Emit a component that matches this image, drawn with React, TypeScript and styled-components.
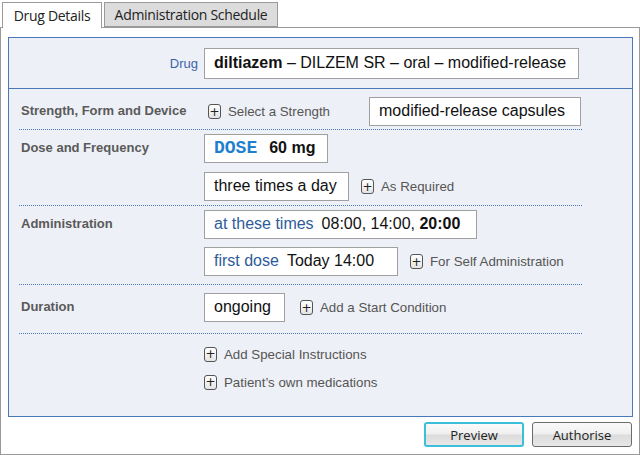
import styled, { createGlobalStyle } from "styled-components";

const GlobalStyle = createGlobalStyle`
  html, body {
    margin: 0;
    padding: 0;
    background: #ffffff;
  }
  body {
    font-family: "Liberation Sans", Arial, sans-serif;
  }
`;

const Page = styled.div`
  width: 640px;
  height: 455px;
  box-sizing: border-box;
  display: flex;
  flex-direction: column;
`;

const TabBar = styled.div`
  display: flex;
  gap: 2px;
  padding: 2px 0 0 2px;
  height: 25px;
  position: relative;
  z-index: 1;
`;

const Tab = styled.div<{ $active?: boolean; $width: number }>`
  width: ${(p) => p.$width}px;
  box-sizing: border-box;
  height: ${(p) => (p.$active ? 26 : 25)}px;
  display: flex;
  align-items: center;
  justify-content: center;
  font-family: "Open Sans", "Noto Sans", sans-serif;
  font-size: 14px;
  letter-spacing: -0.3px;
  color: #222;
  border: 1px solid #9a9a9a;
  border-bottom: ${(p) => (p.$active ? "none" : "1px solid #9a9a9a")};
  background: ${(p) => (p.$active ? "#ffffff" : "#dcdcdc")};
`;

const Frame = styled.div`
  flex: 1;
  border: 1px solid #9a9a9a;
  display: flex;
  flex-direction: column;
  padding: 9px 6px 6px 7px;
  gap: 5px;
`;

const Card = styled.div`
  border: 1px solid #4b79b8;
  background: #edf0f6;
  height: 380px;
  box-sizing: border-box;
  display: flex;
  flex-direction: column;
`;

const DrugHeader = styled.div`
  display: flex;
  align-items: center;
  height: 50px;
  border-bottom: 1px solid #4b79b8;
`;

const DrugLabel = styled.div`
  width: 189px;
  text-align: right;
  padding-right: 6px;
  font-size: 13px;
  color: #3a64a8;
`;

const Box = styled.div<{ $h?: number; $w: number }>`
  box-sizing: border-box;
  width: ${(p) => p.$w}px;
  height: ${(p) => p.$h ?? 29}px;
  display: inline-flex;
  align-items: center;
  padding: 0 0 1px 9px;
  background: #ffffff;
  border: 1px solid #a0a0a0;
  font-size: 16px;
  color: #111;
  white-space: nowrap;
  flex-shrink: 0;
`;

const Rows = styled.div`
  margin-left: 10px;
  width: 563px;
  display: flex;
  flex-direction: column;
`;

const Section = styled.div<{ $pt: number; $pb: number; $last?: boolean }>`
  display: grid;
  grid-template-columns: 185px 1fr;
  align-items: start;
  padding: ${(p) => p.$pt}px 0 ${(p) => p.$pb}px;
  border-bottom: ${(p) => (p.$last ? "none" : "1px dotted #4b79b8")};
`;

const Label = styled.div`
  height: 26px;
  display: flex;
  align-items: center;
  padding-left: 2px;
  font-size: 13px;
  font-weight: bold;
  color: #5a5a5a;
`;

const Stack = styled.div<{ $gap: number }>`
  display: flex;
  flex-direction: column;
  gap: ${(p) => p.$gap}px;
`;

const Line = styled.div<{ $gap?: number; $indent?: number }>`
  display: flex;
  align-items: center;
  gap: ${(p) => p.$gap ?? 12}px;
  height: 29px;
  padding-left: ${(p) => p.$indent ?? 0}px;
`;

const ExtraLine = styled.div`
  display: flex;
  align-items: center;
  height: 28px;
`;

const Action = styled.div`
  display: inline-flex;
  align-items: center;
  gap: 7px;
  font-size: 13.3px;
  color: #555;
  white-space: nowrap;
`;

const PlusIcon = styled.span`
  box-sizing: border-box;
  width: 13px;
  height: 15px;
  border: 1px solid #555;
  border-radius: 3px;
  background: linear-gradient(#ffffff, #e4e4e4);
  display: inline-flex;
  align-items: center;
  justify-content: center;
  font-size: 12px;
  line-height: 1;
  color: #222;
  font-family: "DejaVu Sans", sans-serif;
`;

const Blue = styled.span`
  color: #2e5b9a;
  margin-right: 8px;
`;

const DoseTag = styled.span`
  font-family: "Liberation Mono", "Courier New", monospace;
  font-weight: bold;
  font-size: 18px;
  color: #1f7fcf;
  margin-right: 12px;
`;

const Strong = styled.b`
  font-weight: bold;
`;

const Footer = styled.div`
  display: flex;
  justify-content: flex-end;
  gap: 8px;
  padding-right: 1px;
`;

const Button = styled.button<{ $focus?: boolean }>`
  width: 100px;
  height: 25px;
  box-sizing: border-box;
  border-radius: 3px;
  border: ${(p) => (p.$focus ? "2px solid #3cbfd8" : "1px solid #6b6b6b")};
  background: linear-gradient(#fafafa 0%, #f0f0f0 45%, #dcdcdc 55%, #e8e8e8 100%);
  font-family: "Open Sans", "Noto Sans", sans-serif;
  font-size: 13px;
  color: #222;
  padding: 0;
`;

function Plus({ children }: { children: string }) {
  return (
    <Action>
      <PlusIcon>+</PlusIcon>
      {children}
    </Action>
  );
}

export default function App() {
  return (
    <Page>
      <GlobalStyle />
      <TabBar>
        <Tab $active $width={100}>Drug Details</Tab>
        <Tab $width={174}>Administration Schedule</Tab>
      </TabBar>
      <Frame>
        <Card>
          <DrugHeader>
            <DrugLabel>Drug</DrugLabel>
            <Box $h={31} $w={375}>
              <Strong>diltiazem</Strong>&nbsp;– DILZEM SR – oral – modified-release
            </Box>
          </DrugHeader>
          <Rows>
            <Section $pt={8} $pb={3}>
              <Label>Strength, Form and Device</Label>
              <Line $gap={39} $indent={4}>
                <Plus>Select a Strength</Plus>
                <Box $w={212}>modified-release capsules</Box>
              </Line>
            </Section>
            <Section $pt={4} $pb={4}>
              <Label>Dose and Frequency</Label>
              <Stack $gap={9}>
                <Line>
                  <Box $w={124}>
                    <DoseTag>DOSE</DoseTag>
                    <Strong>60 mg</Strong>
                  </Box>
                </Line>
                <Line>
                  <Box $w={145}>three times a day</Box>
                  <Plus>As Required</Plus>
                </Line>
              </Stack>
            </Section>
            <Section $pt={4} $pb={8}>
              <Label>Administration</Label>
              <Stack $gap={8}>
                <Line>
                  <Box $w={273}>
                    <Blue>at these times</Blue>08:00, 14:00,&nbsp;<Strong>20:00</Strong>
                  </Box>
                </Line>
                <Line>
                  <Box $w={194}>
                    <Blue>first dose</Blue>Today 14:00
                  </Box>
                  <Plus>For Self Administration</Plus>
                </Line>
              </Stack>
            </Section>
            <Section $pt={8} $pb={11}>
              <Label>Duration</Label>
              <Line $gap={15}>
                <Box $w={81}>ongoing</Box>
                <Plus>Add a Start Condition</Plus>
              </Line>
            </Section>
            <Section $pt={6} $pb={0} $last>
              <div />
              <Stack $gap={0}>
                <ExtraLine>
                  <Plus>Add Special Instructions</Plus>
                </ExtraLine>
                <ExtraLine>
                  <Plus>Patient’s own medications</Plus>
                </ExtraLine>
              </Stack>
            </Section>
          </Rows>
        </Card>
        <Footer>
          <Button $focus>Preview</Button>
          <Button>Authorise</Button>
        </Footer>
      </Frame>
    </Page>
  );
}
